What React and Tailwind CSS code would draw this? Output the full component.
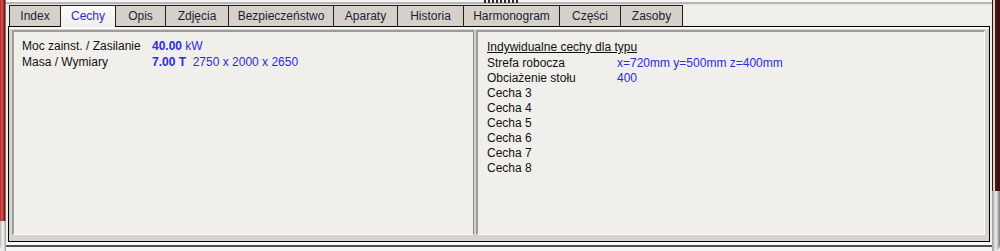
const tabs = [
  ['Index', 51],
  ['Cechy', 55],
  ['Opis', 50],
  ['Zdjęcia', 63],
  ['Bezpieczeństwo', 105],
  ['Aparaty', 64],
  ['Historia', 66],
  ['Harmonogram', 96],
  ['Części', 61],
  ['Zasoby', 62],
];

const cechy = [
  ['Strefa robocza', 'x=720mm y=500mm z=400mm'],
  ['Obciażenie stołu', '400'],
  ['Cecha 3', ''],
  ['Cecha 4', ''],
  ['Cecha 5', ''],
  ['Cecha 6', ''],
  ['Cecha 7', ''],
  ['Cecha 8', ''],
];

function Tab({ label, width, active }) {
  return (
    <div
      style={{ width }}
      className={
        active
          ? 'relative z-10 h-[22px] border-l border-t border-[#1e1e1e] bg-[linear-gradient(to_bottom,#fbfbfb,#f1efec)] text-center leading-[20px] text-[#2a2ac8]'
          : 'h-[21px] border-l border-t border-[#1e1e1e] bg-[#d5d1c9] text-center leading-[20px] text-[#1c1c3c]'
      }
    >
      {label}
    </div>
  );
}

export default function App() {
  return (
    <div className="flex h-[251px] w-[1000px] overflow-hidden bg-[#f0eeeb] text-[12px] font-['Liberation_Sans',Arial,sans-serif]">
      {/* left window frame */}
      <div className="flex w-[6px] flex-col">
        <div className="flex-1 bg-[linear-gradient(to_right,#9a2a2a,#e25050_30%,#b83434_55%,#5c1a1a_75%,#9a9a9a)]" />
        <div className="h-[30px] rounded-bl-[6px] bg-[linear-gradient(to_right,#b8b8b8,#fafafa_50%,#9a9a9a)]" />
      </div>

      <div className="relative flex w-[986px] flex-col">
        {/* top strip */}
        <div className="h-[2px] bg-[#f6f6f6]" />
        <div className="h-[2px] bg-[#b6b6b6]" />
        <div className="h-[1px] bg-[#e6e4e0]" />
        <div className="absolute left-[478px] top-0 h-[3px] w-[34px] bg-[repeating-linear-gradient(90deg,#2a2a2a_0,#2a2a2a_2px,transparent_2px,transparent_4px)]" />

        {/* tabs */}
        <div className="ml-[3px] flex h-[21px] items-start">
          {tabs.map(([label, w], i) => (
            <Tab key={label} label={label} width={w} active={i === 1} />
          ))}
          <div className="h-[21px] border-l border-[#1e1e1e]" />
        </div>

        {/* tab page */}
        <div className="mx-[2px] flex h-[216px] gap-[2px] border border-black bg-[#d6d3cc] pb-[6px] pl-[3px] pr-[4px] pt-[3px] shadow-[inset_0_2px_0_#fafafa]">
          <div className="w-[462px] border-l-2 border-t-2 border-b border-r border-l-[#9c9c9c] border-t-[#9c9c9c] border-b-white border-r-[#8a8a8a] bg-[#f1efec] pl-[8px] pt-[6px] leading-[16px] text-[#111]">
            <div className="flex">
              <div className="w-[130px]">Moc zainst. / Zasilanie</div>
              <div className="text-[#2b2be0]">
                <span className="font-bold">40.00</span> kW
              </div>
            </div>
            <div className="flex">
              <div className="w-[130px]">Masa / Wymiary</div>
              <div className="whitespace-pre text-[#2b2be0]">
                <span className="font-bold">7.00 T</span>  2750 x 2000 x 2650
              </div>
            </div>
          </div>

          <div className="flex-1 border-l-2 border-t-2 border-b border-r border-l-[#9c9c9c] border-t-[#9c9c9c] border-b-white border-r-white bg-[#f1efec] pl-[9px] pt-[8px] leading-[15px] text-[#111]">
            <div className="mb-[1px] underline">Indywidualne cechy dla typu</div>
            {cechy.map(([label, value]) => (
              <div key={label} className="flex">
                <div className="w-[130px]">{label}</div>
                <div className="text-[#2b2be0]">{value}</div>
              </div>
            ))}
          </div>
        </div>

        {/* bottom edge */}
        <div className="h-[3px] bg-[#f8f8f8]" />
        <div className="h-[2px] bg-[#4e4e4e]" />
        <div className="flex-1 bg-[#f4f4f4]" />
      </div>

      {/* right window frame */}
      <div className="flex w-[8px] flex-col">
        <div className="flex flex-1">
          <div className="w-[1px] bg-[#3a1212]" />
          <div className="w-[2px] bg-[#d8d4d0]" />
          <div className="flex-1 bg-[linear-gradient(to_right,#4a1616,#3a1010)]" />
        </div>
        <div className="h-[60px] rounded-br-[6px] bg-[linear-gradient(to_right,#9a9a9a,#f0f0f0_50%,#7a7a7a)]" />
      </div>
    </div>
  );
}
